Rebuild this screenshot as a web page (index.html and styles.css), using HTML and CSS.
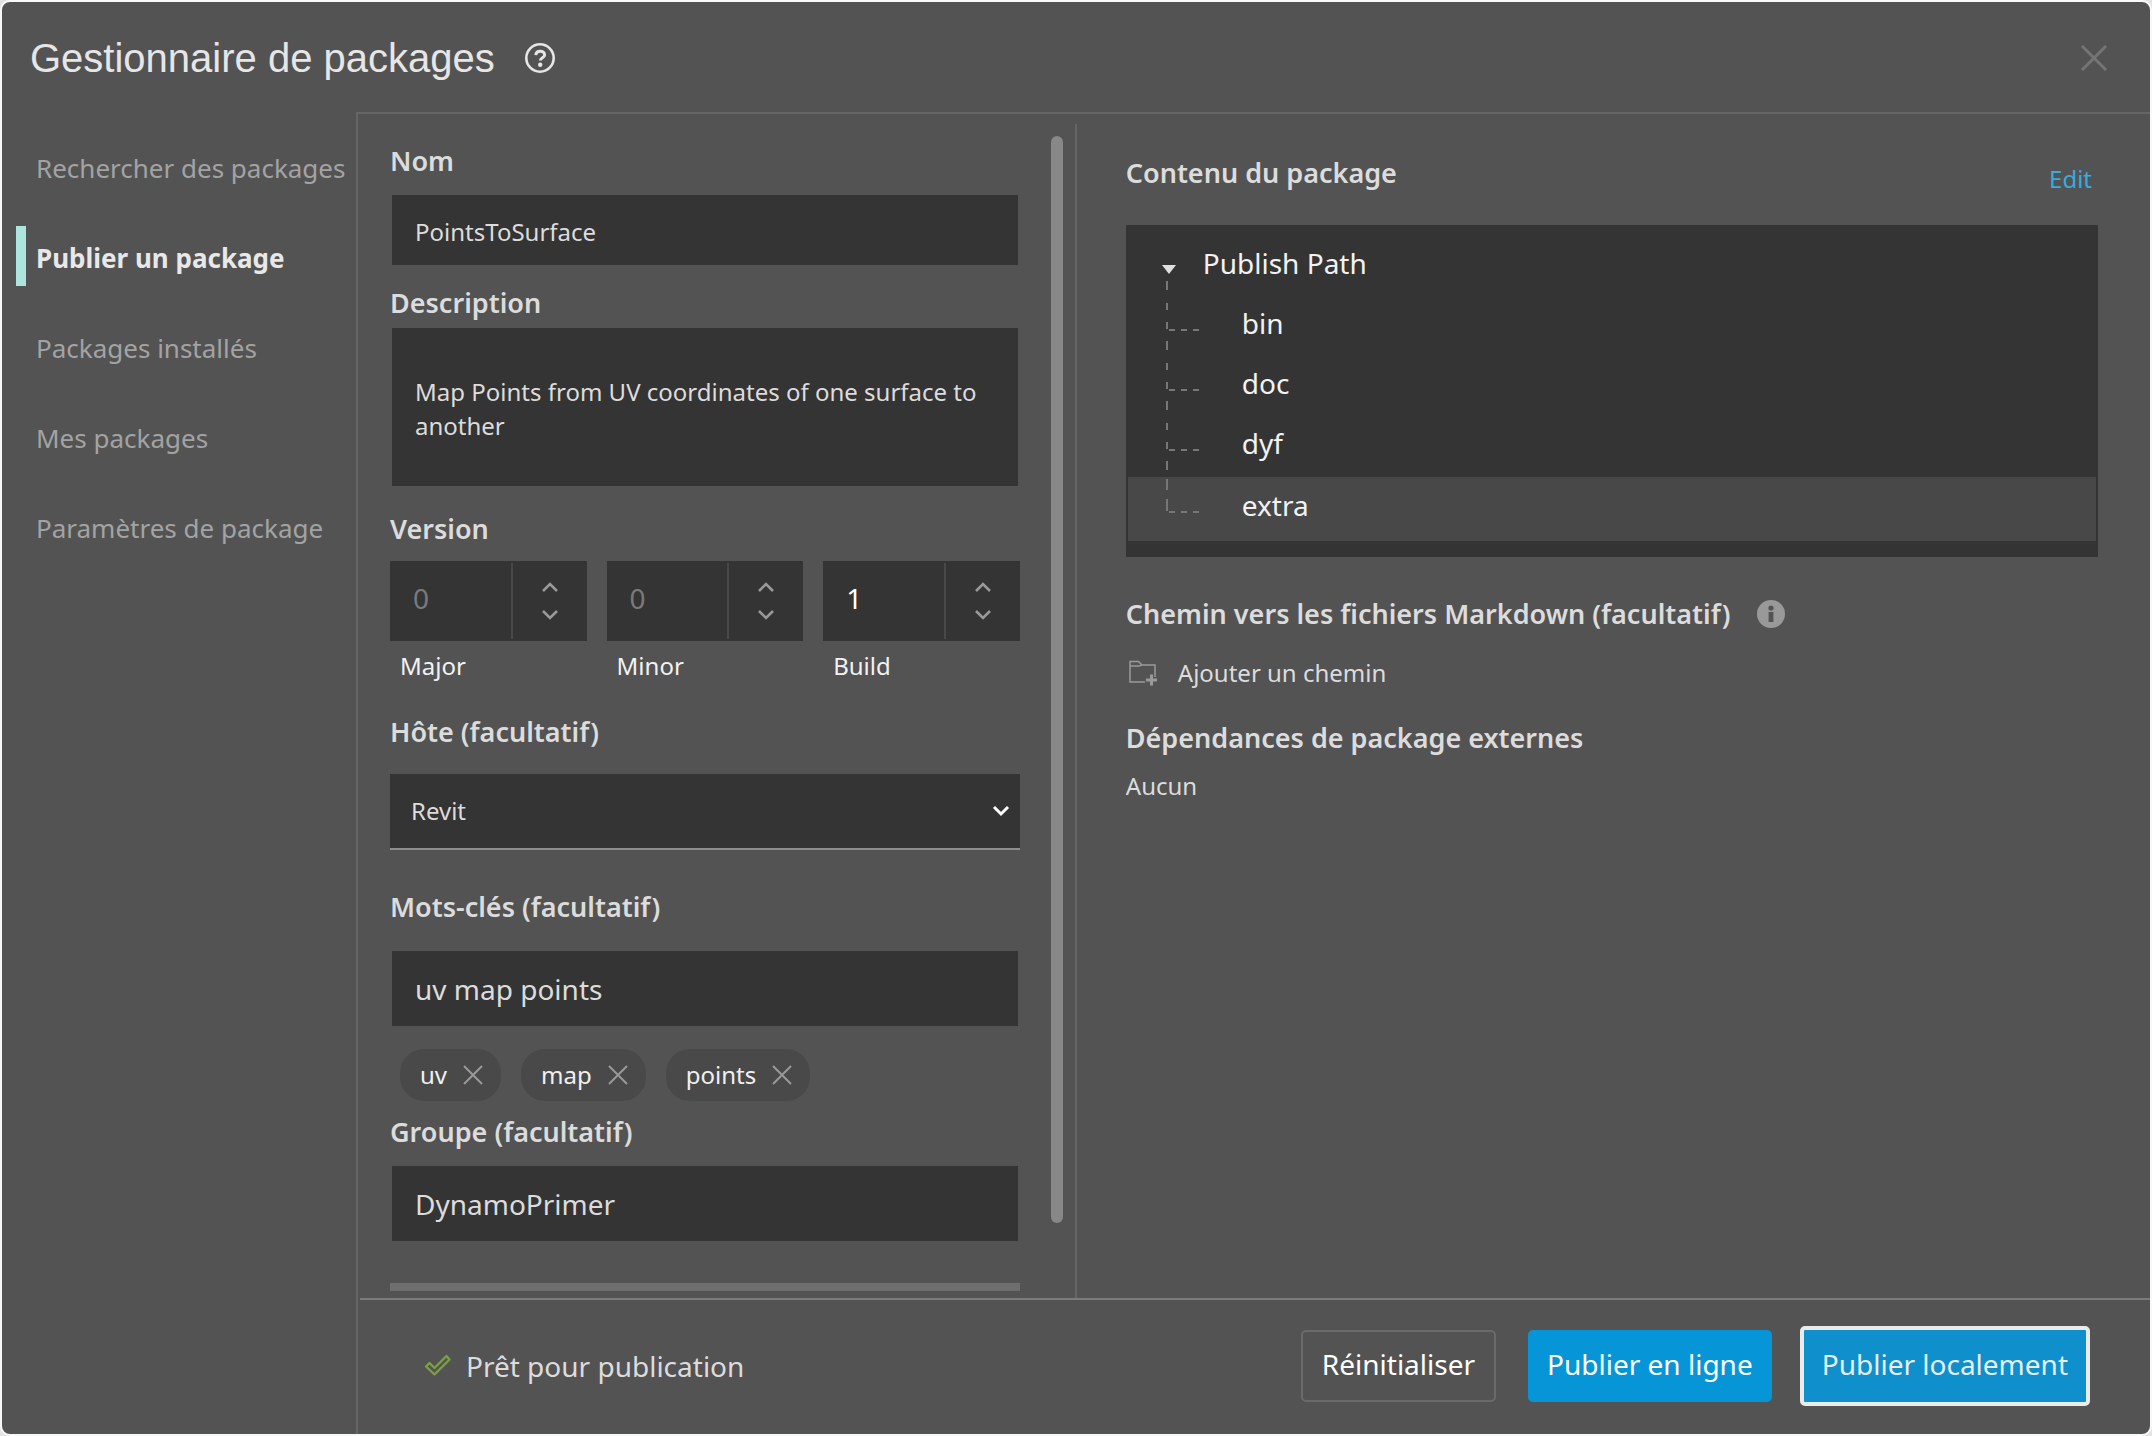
FILE: index.html
```html
<!DOCTYPE html>
<html lang="fr">
<head>
<meta charset="utf-8">
<title>Gestionnaire de packages</title>
<link rel="stylesheet" href="styles.css">
</head>
<body>
<div class="window">
  <header class="titlebar">
    <h1 class="title">Gestionnaire de packages</h1>
    <button class="icon-button" type="button" aria-label="Aide">
      <svg width="30" height="30" viewBox="0 0 30 30" fill="none" stroke="#e6e6e6">
        <circle cx="15" cy="15" r="13.7" stroke-width="2.6"/>
        <path d="M10.8 12.2c.2-2.600 1.800-4 4.400-4s4.400 1.500 4.400 3.700c0 3-4.200 2.900-4.200 5.700" stroke-width="3"/>
        <circle cx="15.200" cy="21.800" r="2.200" fill="#e6e6e6" stroke="none"/>
      </svg>
    </button>
    <button class="icon-button close" type="button" aria-label="Fermer">
      <svg width="28" height="28" viewBox="0 0 28 28" stroke="#757575" stroke-width="3"><path d="M2 2l24 24M26 2L2 26"/></svg>
    </button>
  </header>

  <div class="body">
    <nav class="sidebar">
      <a class="nav-item" href="#search">Rechercher des packages</a>
      <a class="nav-item active" href="#publish" aria-current="page">Publier un package</a>
      <a class="nav-item" href="#installed">Packages installés</a>
      <a class="nav-item" href="#mine">Mes packages</a>
      <a class="nav-item" href="#settings">Paramètres de package</a>
    </nav>

    <main class="main">
      <div class="panels">
        <form class="form-panel" id="publish-form">
          <div class="fields">
            <label class="label" for="name">Nom</label>
            <input class="input name" id="name" type="text" value="PointsToSurface">

            <label class="label label-description" for="description">Description</label>
            <textarea class="input description" id="description" rows="2">Map Points from UV coordinates of one surface to another</textarea>

            <h2 class="label label-version">Version</h2>
            <div class="versions">
              <div class="version">
                <div class="spinner">
                  <input class="number" id="major" type="text" inputmode="numeric" placeholder="0">
                  <div class="steps">
                    <button class="step" type="button" aria-label="Augmenter Major"><svg width="18" height="12" viewBox="0 0 18 12"><path d="M2 10l7-7 7 7"/></svg></button>
                    <button class="step" type="button" aria-label="Diminuer Major"><svg width="18" height="12" viewBox="0 0 18 12"><path d="M2 2l7 7 7-7"/></svg></button>
                  </div>
                </div>
                <label class="caption" for="major">Major</label>
              </div>
              <div class="version">
                <div class="spinner">
                  <input class="number" id="minor" type="text" inputmode="numeric" placeholder="0">
                  <div class="steps">
                    <button class="step" type="button" aria-label="Augmenter Minor"><svg width="18" height="12" viewBox="0 0 18 12"><path d="M2 10l7-7 7 7"/></svg></button>
                    <button class="step" type="button" aria-label="Diminuer Minor"><svg width="18" height="12" viewBox="0 0 18 12"><path d="M2 2l7 7 7-7"/></svg></button>
                  </div>
                </div>
                <label class="caption" for="minor">Minor</label>
              </div>
              <div class="version">
                <div class="spinner">
                  <input class="number" id="build" type="text" inputmode="numeric" value="1">
                  <div class="steps">
                    <button class="step" type="button" aria-label="Augmenter Build"><svg width="18" height="12" viewBox="0 0 18 12"><path d="M2 10l7-7 7 7"/></svg></button>
                    <button class="step" type="button" aria-label="Diminuer Build"><svg width="18" height="12" viewBox="0 0 18 12"><path d="M2 2l7 7 7-7"/></svg></button>
                  </div>
                </div>
                <label class="caption" for="build">Build</label>
              </div>
            </div>

            <label class="label label-host" for="host">Hôte (facultatif)</label>
            <div class="select-box">
              <select class="select" id="host"><option>Revit</option></select>
              <svg class="select-arrow" width="18" height="12" viewBox="0 0 18 12"><path d="M2 2l7 7 7-7"/></svg>
            </div>

            <label class="label label-keywords" for="keywords">Mots-clés (facultatif)</label>
            <input class="input large keywords" id="keywords" type="text" value="uv map points">
            <div class="chips">
              <span class="chip">uv<button class="chip-remove" type="button" aria-label="Supprimer uv"><svg width="22" height="22" viewBox="0 0 22 22"><path d="M2 2l18 18M20 2L2 20"/></svg></button></span>
              <span class="chip">map<button class="chip-remove" type="button" aria-label="Supprimer map"><svg width="22" height="22" viewBox="0 0 22 22"><path d="M2 2l18 18M20 2L2 20"/></svg></button></span>
              <span class="chip">points<button class="chip-remove" type="button" aria-label="Supprimer points"><svg width="22" height="22" viewBox="0 0 22 22"><path d="M2 2l18 18M20 2L2 20"/></svg></button></span>
            </div>

            <label class="label label-group" for="group">Groupe (facultatif)</label>
            <input class="input large" id="group" type="text" value="DynamoPrimer">
            <div class="section-rule"></div>
          </div>
          <div class="scrollbar"></div>
        </form>

        <section class="content-panel">
          <div class="content-head">
            <h2 class="label">Contenu du package</h2>
            <a class="edit" href="#edit">Edit</a>
          </div>
          <ul class="tree">
            <li class="tree-row">
              <svg class="guide" width="44" height="60" viewBox="0 0 44 60"><path d="M0 31h14l-7 9z" fill="#e0e0e0"/><path d="M5 47v9" class="dash"/></svg>
              <span class="root">Publish Path</span>
            </li>
            <li class="tree-row"><svg class="guide" width="44" height="60" viewBox="0 0 44 60"><path d="M5 9v7M5 28v7M5 47v9M7 36h6M19 36h6M31 36h6" class="dash"/></svg><span class="leaf">bin</span></li>
            <li class="tree-row"><svg class="guide" width="44" height="60" viewBox="0 0 44 60"><path d="M5 9v7M5 28v7M5 47v9M7 36h6M19 36h6M31 36h6" class="dash"/></svg><span class="leaf">doc</span></li>
            <li class="tree-row"><svg class="guide" width="44" height="60" viewBox="0 0 44 60"><path d="M5 9v7M5 28v7M5 47v9M7 36h6M19 36h6M31 36h6" class="dash"/></svg><span class="leaf">dyf</span></li>
            <li class="tree-row selected"><svg class="guide" width="44" height="60" viewBox="0 0 44 60"><path d="M5 2v11M5 22v12M7 35h6M19 35h6M31 35h6" class="dash"/></svg><span class="leaf">extra</span></li>
          </ul>

          <div class="markdown-head">
            <h2 class="label">Chemin vers les fichiers Markdown (facultatif)</h2>
            <svg width="28" height="28" viewBox="0 0 28 28"><circle cx="14" cy="14" r="14" fill="#999"/><circle cx="14" cy="8" r="2.6" fill="#535353"/><path d="M11.6 12h4.8v10h-4.8z" fill="#535353"/></svg>
          </div>
          <button class="add-path" type="button">
            <svg width="30" height="26" viewBox="0 0 30 26" fill="none" stroke="#9a9a9a" stroke-width="1.5"><path d="M17 22H2V1.500h8.500l3.500 3.500h13v12M2 6h9l3-1"/><path d="M23.500 14.500v11M18 20h11" stroke-width="3"/></svg>
            <span>Ajouter un chemin</span>
          </button>
          <h2 class="label label-deps">Dépendances de package externes</h2>
          <p class="deps">Aucun</p>
        </section>
      </div>

      <footer class="footer">
        <svg width="28" height="24" viewBox="0 0 28 24" fill="none" stroke="#7ba03c" stroke-width="2.400" stroke-linejoin="round"><path d="M2 12.500l3.500-3.500 5 5L22.500 2l3 3.500L10.500 20.500z"/></svg>
        <span class="status">Prêt pour publication</span>
        <button class="button" type="button">Réinitialiser</button>
        <button class="button primary" type="button">Publier en ligne</button>
        <button class="button primary focused" type="submit" form="publish-form">Publier localement</button>
      </footer>
    </main>
  </div>
</div>
</body>
</html>
```
FILE: styles.css
```css
* {
  box-sizing: border-box;
}

body {
  margin: 0;
  background: #e4e4e4;
  color: #dcdcdc;
  font: 24px/32px "Noto Sans", "Open Sans", sans-serif;
}

h1, h2, p, ul {
  margin: 0;
  padding: 0;
}

button, input, textarea, select {
  font: inherit;
  color: inherit;
  border: 0;
  border-radius: 0;
  margin: 0;
  padding: 0;
  background: none;
}

a {
  text-decoration: none;
}

svg {
  display: block;
  flex: none;
}

.window {
  display: flex;
  flex-direction: column;
  min-height: 100vh;
  border: 2px solid #f8f9f9;
  border-radius: 10px;
  background: #535353;
}

/* Title bar */
.titlebar {
  display: flex;
  align-items: center;
  height: 110px;
  padding: 2px 42px 0 28px;
}

.title {
  margin-right: 30px;
  color: #e6e6e6;
  font: 40px/48px "Liberation Sans", Arial, sans-serif;
}

.close {
  margin-left: auto;
}

.body {
  display: grid;
  grid-template-columns: 354px minmax(0, 1fr);
  flex: 1;
}

/* Navigation */
.sidebar {
  display: flex;
  flex-direction: column;
  gap: 30px;
  padding: 24px 0 0 14px;
}

.nav-item {
  padding: 4px 0 0 10px;
  border-left: 10px solid transparent;
  color: #a3a3a3;
  font-size: 26px;
  line-height: 56px;
  white-space: nowrap;
}

.nav-item.active {
  border-color: #ade4de;
  color: #e8e8e8;
  font-weight: 700;
}

/* Main area */
.main {
  display: flex;
  flex-direction: column;
  border-top: 2px solid #656565;
  border-left: 2px solid #656565;
}

.panels {
  display: grid;
  grid-template-columns: minmax(0, 2fr) minmax(0, 3fr);
  flex: 1;
}

.form-panel {
  display: flex;
  padding: 10px 12px 7px 32px;
}

.fields {
  display: flex;
  flex: 1;
  flex-direction: column;
  min-width: 0;
  padding-top: 19px;
}

.scrollbar {
  width: 12px;
  margin: 12px 0 68px 31px;
  border-radius: 6px;
  background: #888;
}

.label {
  color: #dcdcdc;
  font-size: 27px;
  font-weight: 600;
  line-height: 36px;
}

.input {
  height: 70px;
  margin: 0 2px;
  padding: 2px 23px 0;
  background: #343434;
}

.name {
  margin-top: 16px;
}

.label-description {
  margin-top: 20px;
}

.description {
  height: 158px;
  margin-top: 7px;
  padding: 47px 23px 0;
  line-height: 34px;
  resize: none;
}

.label-version {
  margin-top: 25px;
}

.versions {
  display: grid;
  grid-template-columns: repeat(3, minmax(0, 1fr));
  gap: 20px;
  margin-top: 14px;
}

.spinner {
  display: flex;
  height: 80px;
  padding: 2px 0;
  background: #343434;
}

.number {
  flex: 1;
  min-width: 0;
  padding: 0 0 6px 23px;
  color: #fff;
  font-size: 28px;
}

.number::placeholder {
  color: #7a7a7a;
}

.steps {
  display: flex;
  flex-direction: column;
  justify-content: center;
  width: 76px;
  border-left: 2px solid #484848;
}

.step {
  display: flex;
  align-items: center;
  justify-content: center;
  height: 28px;
}

.step path,
.select-arrow path {
  fill: none;
  stroke: #999;
  stroke-width: 2.6;
}

.caption {
  display: block;
  margin: 9px 0 0 10px;
  color: #f2f2f2;
}

.label-host {
  margin-top: 32px;
}

.select-box {
  display: grid;
  align-items: center;
  margin-top: 24px;
  border-bottom: 2px solid #8e8e8e;
  background: #343434;
}

.select {
  grid-area: 1 / 1;
  height: 74px;
  padding: 0 21px;
  appearance: none;
}

.select-arrow {
  grid-area: 1 / 1;
  justify-self: end;
  margin-right: 10px;
  pointer-events: none;
}

.select-arrow path {
  stroke: #fff;
  stroke-width: 3;
}

.label-keywords {
  margin-top: 39px;
}

.large {
  height: 75px;
  margin-top: 16px;
  padding-top: 0;
  font-size: 28px;
}

.keywords {
  margin-top: 26px;
}

.chips {
  display: flex;
  gap: 20px;
  margin: 23px 0 0 10px;
}

.chip {
  display: flex;
  align-items: center;
  gap: 15px;
  height: 52px;
  padding: 0 17px 0 20px;
  border-radius: 24px;
  background: #494949;
  color: #f0f0f0;
}

.chip-remove path {
  stroke: #999;
  stroke-width: 2;
}

.label-group {
  margin-top: 13px;
}

.section-rule {
  height: 8px;
  margin-top: 42px;
  background: #6e6e6e;
}

/* Package content */
.content-panel {
  margin-top: 10px;
  padding: 31px 52px 0 49px;
  border-left: 2px solid #656565;
}

.content-head {
  display: flex;
  align-items: flex-start;
  justify-content: space-between;
  height: 70px;
}

.edit {
  margin: 8px 6px 0 0;
  color: #38abdf;
}

.tree {
  padding: 9px 2px 16px;
  background: #343434;
  color: #f2f2f2;
  font-size: 28px;
  line-height: 58px;
  list-style: none;
}

.tree-row {
  display: flex;
  height: 60px;
  padding-left: 34px;
}

.tree-row.selected {
  height: 64px;
  margin-top: 3px;
  background: #484848;
  line-height: 56px;
}

.dash {
  stroke: #777;
  stroke-width: 2;
}

.leaf {
  margin-left: 36px;
}

.root {
  margin-left: -3px;
}

.markdown-head {
  display: flex;
  align-items: center;
  gap: 26px;
  margin-top: 39px;
}

.add-path {
  display: flex;
  align-items: center;
  gap: 20px;
  margin: 25px 0 0 2px;
}

.label-deps {
  margin-top: 31px;
}

.deps {
  margin-top: 14px;
}

/* Footer */
.footer {
  display: flex;
  align-items: center;
  height: 136px;
  margin-left: 2px;
  padding: 0 60px 2px 64px;
  border-top: 2px solid #7b7b7b;
}

.status {
  margin: 0 auto 0 14px;
  font-size: 28px;
}

.button {
  height: 72px;
  padding: 0 19px 4px;
  border: 2px solid #6a6a6a;
  border-radius: 5px;
  color: #fff;
  font-size: 28px;
}

.button.primary {
  margin-left: 32px;
  padding: 0 17px 4px;
  border-color: #0696d7;
  background: #0696d7;
}

.button.focused {
  height: 80px;
  margin-left: 28px;
  padding: 0 18px 4px;
  border: 4px solid #ebebeb;
  background: #0f8fcc;
  color: #e6eef2;
}
```
